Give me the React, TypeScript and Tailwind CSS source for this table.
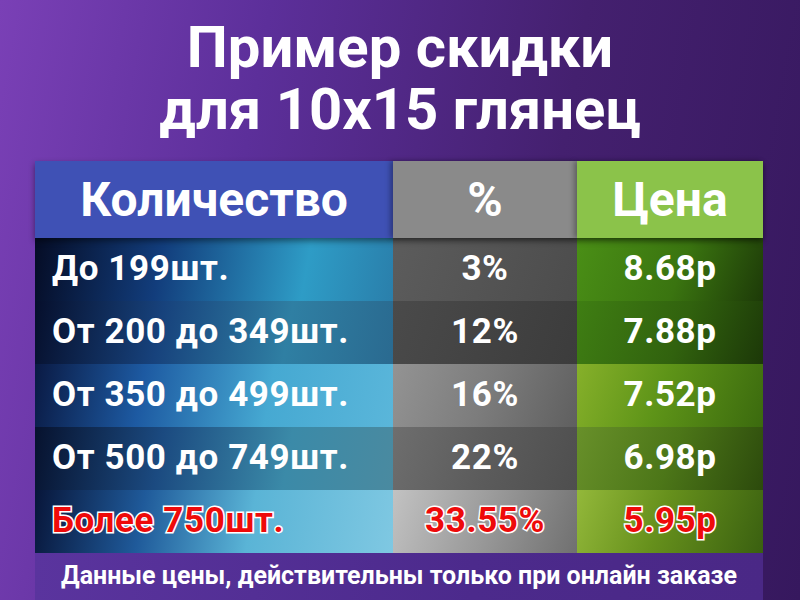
import React from 'react';

interface Row {
    qty: string;
    pct: string;
    price: string;
    qtyBg: string;
    pctBg: string;
    priceBg: string;
    red?: boolean;
}

const rows: Row[] = [
    {
        qty: 'До 199шт.',
        pct: '3%',
        price: '8.68р',
        qtyBg: 'bg-[linear-gradient(100deg,#050c25_0%,#123d7c_35%,#2e9cc6_75%,#2a7fab_100%)]',
        pctBg: 'bg-[linear-gradient(110deg,#5c5c5c_0%,#4c4c4c_100%)]',
        priceBg: 'bg-[linear-gradient(110deg,#4a8f16_0%,#3a7410_55%,#1d3a08_100%)]',
    },
    {
        qty: 'От 200 до 349шт.',
        pct: '12%',
        price: '7.88р',
        qtyBg: 'bg-[linear-gradient(100deg,#060f2c_0%,#17427c_35%,#2f7fa3_70%,#2a6a90_100%)]',
        pctBg: 'bg-[linear-gradient(110deg,#4a4a4a_0%,#3c3c3c_100%)]',
        priceBg: 'bg-[linear-gradient(110deg,#3f7e13_0%,#31620e_55%,#1c3808_100%)]',
    },
    {
        qty: 'От 350 до 499шт.',
        pct: '16%',
        price: '7.52р',
        qtyBg: 'bg-[linear-gradient(100deg,#0a1a44_0%,#1d5aa2_30%,#46a9d2_65%,#5ab6da_100%)]',
        pctBg: 'bg-[linear-gradient(110deg,#939393_0%,#7c7c7c_50%,#5f5f5f_100%)]',
        priceBg: 'bg-[linear-gradient(110deg,#86b02a_0%,#5e9418_45%,#3b6a0e_100%)]',
    },
    {
        qty: 'От 500 до 749шт.',
        pct: '22%',
        price: '6.98р',
        qtyBg: 'bg-[linear-gradient(100deg,#07122e_0%,#1b4a80_35%,#3b8aa8_70%,#4a8aa0_100%)]',
        pctBg: 'bg-[linear-gradient(110deg,#6e6e6e_0%,#5c5c5c_50%,#4e4e4e_100%)]',
        priceBg: 'bg-[linear-gradient(110deg,#68902a_0%,#4c7618_50%,#2c4a0c_100%)]',
    },
    {
        qty: 'Более 750шт.',
        pct: '33.55%',
        price: '5.95р',
        qtyBg: 'bg-[linear-gradient(100deg,#08163a_0%,#1f5a9a_30%,#5ab4d6_60%,#7fc8e2_100%)]',
        pctBg: 'bg-[linear-gradient(110deg,#c2c2c2_0%,#9a9a9a_50%,#707070_100%)]',
        priceBg: 'bg-[linear-gradient(110deg,#93b83a_0%,#66901c_45%,#3a6010_100%)]',
        red: true,
    },
];

const redText = 'text-[#ee0a0a] [-webkit-text-stroke:3px_#ffffff] [paint-order:stroke_fill]';

const App: React.FC = () => {
    return (
        <div className="w-[800px] h-[600px] overflow-hidden flex flex-col bg-[linear-gradient(100deg,#7a40b6_0%,#5c2f9a_30%,#44206f_65%,#36185e_100%)] font-['Roboto','Liberation_Sans',sans-serif]">
            {/* Title */}
            <div className="pt-[16px] mb-[21px] text-center text-white font-bold text-[58px] leading-[62px]">
                <div>Пример скидки</div>
                <div>для 10x15 глянец</div>
            </div>

            <div className="ml-[35px] w-[728px] flex flex-col flex-1">
                {/* Header */}
                <div className="flex h-[77px] text-white font-bold text-[48px] shadow-[0_3px_6px_rgba(0,0,0,0.45)] relative z-10">
                    <div className="w-[358px] bg-[#3f51b5] flex items-center justify-center">
                        Количество
                    </div>
                    <div className="w-[184px] bg-[#8a8a8a] flex items-center justify-center shadow-[-3px_0_5px_rgba(0,0,0,0.3)]">
                        %
                    </div>
                    <div className="w-[186px] bg-[#8bc34a] flex items-center justify-center shadow-[-3px_0_5px_rgba(0,0,0,0.3)]">
                        Цена
                    </div>
                </div>

                {/* Rows */}
                {rows.map((row, i) => (
                    <div key={i} className="flex h-[63px] font-bold text-[35px] tracking-[0.6px]">
                        <div className={`w-[358px] ${row.qtyBg} flex items-center pl-[17px] ${row.red ? redText : 'text-white'}`}>
                            {row.qty}
                        </div>
                        <div className={`w-[184px] ${row.pctBg} flex items-center justify-center ${row.red ? redText : 'text-white'}`}>
                            {row.pct}
                        </div>
                        <div className={`w-[186px] ${row.priceBg} flex items-center justify-center ${row.red ? redText : 'text-white'}`}>
                            {row.price}
                        </div>
                    </div>
                ))}

                {/* Footer */}
                <div className="flex-1 bg-[linear-gradient(90deg,#5a349e_0%,#4c2a8c_60%,#4a2886_100%)] flex items-center justify-center text-white font-bold text-[25px] pb-[2px]">
                    Данные цены, действительны только при онлайн заказе
                </div>
            </div>
        </div>
    );
};

export default App;
